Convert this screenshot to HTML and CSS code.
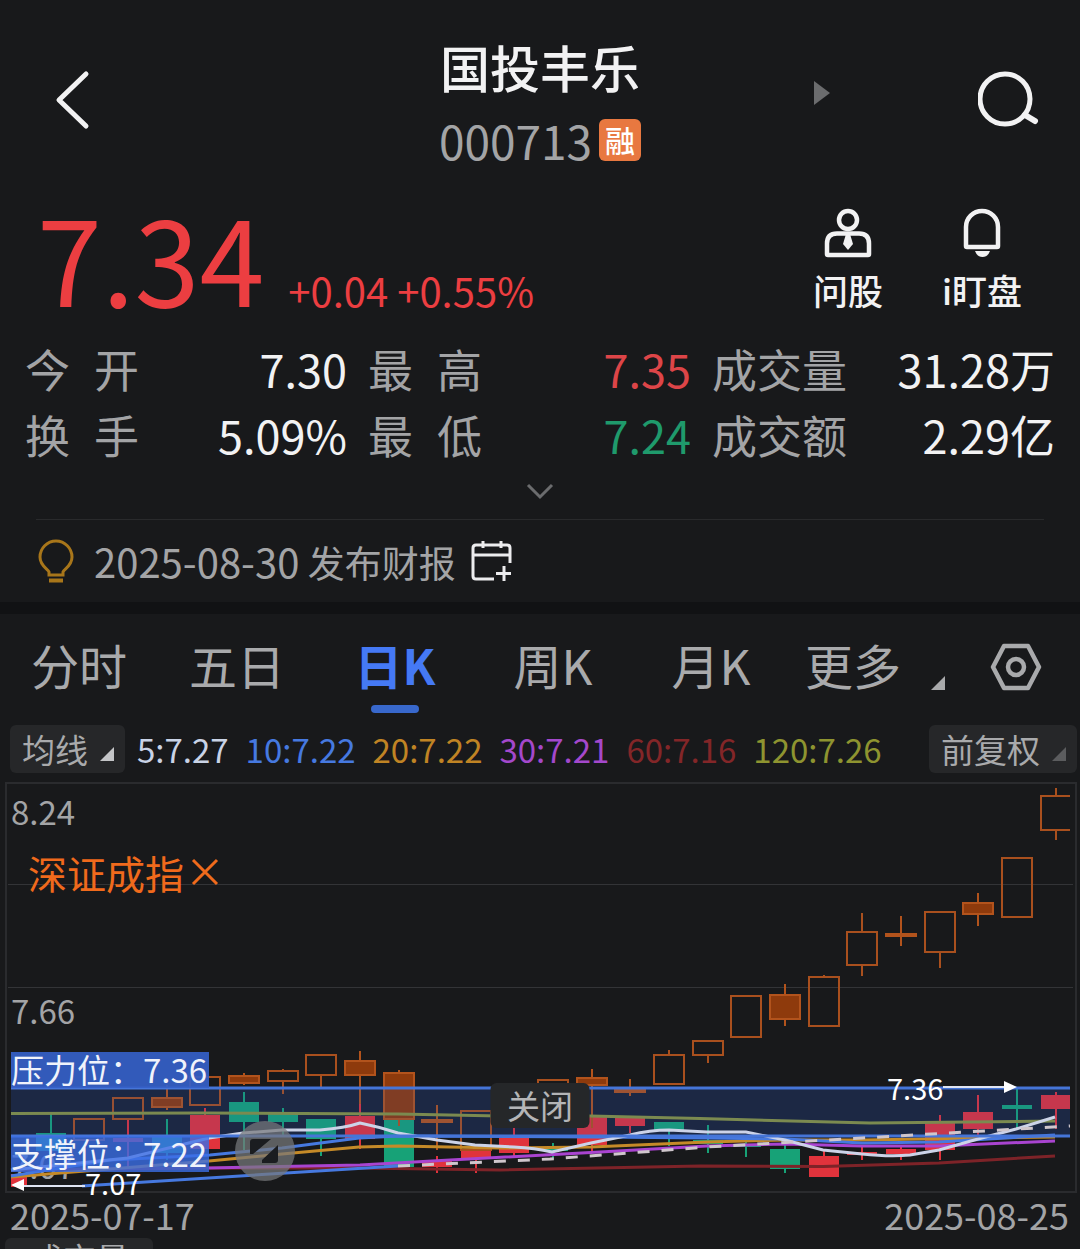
FILE: index.html
```html
<!DOCTYPE html>
<html lang="zh-CN">
<head>
<meta charset="utf-8">
<meta name="viewport" content="width=device-width, initial-scale=1">
<title>国投丰乐 000713</title>
<link rel="stylesheet" href="styles.css">
</head>
<body>
<main class="app">
  <header class="header">
    <button class="icon-btn back" aria-label="返回">
      <svg width="36" height="60" viewBox="0 0 36 60"><path d="M31 4 4 30l27 26" fill="none" stroke="#f2f2f3" stroke-width="5" stroke-linecap="round" stroke-linejoin="round"/></svg>
    </button>
    <div class="title">
      <h1 class="name">国投丰乐</h1>
      <p class="code">000713<span class="badge">融</span></p>
    </div>
    <div class="header-right">
      <button class="icon-btn next" aria-label="下一只">
        <svg width="16" height="26" viewBox="0 0 16 26"><path d="M0 1v24l16-12z" fill="#6b6c6e"/></svg>
      </button>
      <button class="icon-btn" aria-label="搜索">
        <svg width="62" height="56" viewBox="0 0 62 56"><circle cx="27" cy="28" r="25" fill="none" stroke="#f2f2f3" stroke-width="5"/><path d="m47 44 10 6" stroke="#f2f2f3" stroke-width="6" stroke-linecap="round"/></svg>
      </button>
    </div>
  </header>

  <section class="quote">
    <p class="price">7.34</p>
    <p class="change">+0.04 +0.55%</p>
    <div class="actions">
      <button class="action">
        <svg width="48" height="50" viewBox="0 0 48 50" fill="none" stroke="#f2f2f3" stroke-width="4.5"><circle cx="24" cy="12" r="9"/><path d="M13 25.500h22q10 0 10 10V46a1 1 0 0 1-1 1H4a1 1 0 0 1-1-1V35.500q0-10 10-10z"/><path d="M22 26h4l3 10-5 6-5-6z" fill="#f2f2f3" stroke="none"/></svg>
        问股
      </button>
      <button class="action">
        <svg width="48" height="50" viewBox="0 0 48 50" fill="none" stroke="#f2f2f3" stroke-width="4.500"><path d="M8 38V19a16 16 0 0 1 32 0v19q0 1-1 1H9q-1 0-1-1z"/><path d="M17 43h15q-2 6-7.500 6T17 43z" fill="#f2f2f3" stroke="none"/></svg>
        i盯盘
      </button>
    </div>
  </section>

  <dl class="stats">
    <div class="stat"><dt><span>今</span><span>开</span></dt><dd>7.30</dd></div>
    <div class="stat"><dt><span>最</span><span>高</span></dt><dd class="up">7.35</dd></div>
    <div class="stat"><dt class="wide">成交量</dt><dd>31.28万</dd></div>
    <div class="stat"><dt><span>换</span><span>手</span></dt><dd>5.09%</dd></div>
    <div class="stat"><dt><span>最</span><span>低</span></dt><dd class="down">7.24</dd></div>
    <div class="stat"><dt class="wide">成交额</dt><dd>2.29亿</dd></div>
  </dl>
  <button class="icon-btn expand" aria-label="展开">
    <svg width="30" height="18" viewBox="0 0 30 18"><path d="m3 3 12 12L27 3" fill="none" stroke="#6b6c6e" stroke-width="3"/></svg>
  </button>

  <section class="notice">
    <svg width="40" height="44" viewBox="0 0 40 44" fill="none" stroke="#a8761a" stroke-width="3"><path d="M13 36v-3c-1-3-9-6-9-15a16 16 0 0 1 32 0c0 9-8 12-9 15v3z"/><path d="M13 41.500h14" stroke-width="4"/></svg>
    <p class="notice-text"><time class="notice-date">2025-08-30</time> 发布财报</p>
    <button class="icon-btn" aria-label="添加提醒">
      <svg width="42" height="42" viewBox="0 0 42 42" fill="none" stroke="#ececee" stroke-width="3"><path d="M39 23V8q0-3-3-3H5Q2 5 2 8v28q0 3 3 3h18M2 15h37M12 1v7M30 1v7M33 26v15M25 33.500h15"/></svg>
    </button>
  </section>

  <nav class="tabs">
    <button class="tab">分时</button>
    <button class="tab">五日</button>
    <button class="tab active" aria-current="true">日K</button>
    <button class="tab">周K</button>
    <button class="tab">月K</button>
    <button class="tab more">更多<i class="corner"></i></button>
    <button class="tab" aria-label="设置">
      <svg width="52" height="48" viewBox="0 0 52 48" fill="none" stroke="#a9aaac" stroke-width="4.500"><path d="M14 3h24l11 21-11 21H14L3 24z" stroke-linejoin="round"/><circle cx="26" cy="24" r="8"/></svg>
    </button>
  </nav>

  <div class="averages">
    <button class="pill">均线<i class="corner light"></i></button>
    <ul class="ma-list">
      <li class="ma5">5:7.27</li>
      <li class="ma10">10:7.22</li>
      <li class="ma20">20:7.22</li>
      <li class="ma30">30:7.21</li>
      <li class="ma60">60:7.16</li>
      <li class="ma120">120:7.26</li>
    </ul>
    <button class="pill">前复权<i class="corner dim"></i></button>
  </div>

  <section class="chart">
    <svg class="plot" viewBox="0 782 1080 412" role="img" aria-label="日K线图">
      <defs><clipPath id="area"><rect x="11" y="784" width="1059" height="408"/></clipPath></defs>
      <rect class="frame" x="6" y="783" width="1070" height="409"/>
      <path class="grid" d="M8 884.500H1073M8 987.500H1073"/>
      <text class="axis" x="11" y="825">8.24</text>
      <text class="axis" x="11" y="1024">7.66</text>
      <text class="axis" x="11" y="1179">7.07</text>
      <g clip-path="url(#area)">
        <rect class="band" x="11" y="1088" width="1059" height="48"/>
        <g id="stock"></g>
        <g id="index"></g>
        <rect class="band" x="11" y="1088" width="1059" height="48"/>
      </g>
      <g class="line">
        <path class="s120" d="M11 1113.500 205 1113 398 1114 500 1116 590 1116 700 1118.500 870 1123 1055 1121"/>
        <path class="s60" d="M11 1170 209 1168 360 1168 500 1170 700 1166 823 1166.500 939 1163 1055 1156"/>
        <path class="s30" d="M209 1168 360 1165 450 1160 600 1152 707 1146 785 1144 862 1146 939 1146 1055 1141"/>
        <path class="s20" d="M11 1177 209 1161 282 1154 359 1147 398 1146 500 1148 591 1147 707 1142 785 1140 862 1140 1055 1137"/>
        <path class="s10" d="M11 1176 110 1160 210 1155 282 1148 359 1138 398 1136 600 1137 707 1138 785 1139 862 1143 939 1142 1055 1135"/>
        <path class="s5" d="M11 1170 128 1158 209 1138 243 1133 282 1130 320 1130Q345 1128 360 1123 380 1127 398 1133L437 1140 475 1145 514 1147Q535 1148 552 1152L591 1143 630 1135Q650 1130 669 1130L707 1132 746 1132 785 1140 823 1150 862 1154Q890 1157 910 1155L939 1150 978 1139 1016 1129 1055 1117"/>
        <path class="level" d="M11 1088H1070M11 1136H1070"/>
        <path class="s10" d="M82 1186 398 1166"/>
        <path class="trend" d="M398 1166 550 1159 707 1147 862 1138 1070 1126"/>
      </g>
      <rect class="tag" x="11" y="1052" width="198" height="36"/>
      <rect class="tag low" x="11" y="1136" width="198" height="36"/>
      <text class="tag-text" x="11" y="1083">压力位：7.36</text>
      <text class="tag-text" x="11" y="1167">支撑位：7.22</text>
      <path d="M85 1186H22M943 1087h66" stroke="#dfe4f2" stroke-width="2"/>
      <path d="m11 1185 13-6v12zM1017 1087l-13-6v12z" fill="#fff"/>
      <text class="mark" x="85" y="1195">7.07</text>
      <text class="mark" x="887" y="1100">7.36</text>
      <circle cx="265" cy="1151" r="30" fill="#77787b" fill-opacity=".72"/>
      <path d="M250 1142q0-3 3-3h18l-18 15h-3zM278 1145v15q0 3-3 3h-13v-3z" fill="#1b1d20"/>
    </svg>
    <button class="compare">深证成指<svg width="28" height="28" viewBox="0 0 28 28"><path d="m2 2 24 24M26 2 2 26" stroke="#f06a1c" stroke-width="3"/></svg></button>
    <button class="close">关闭</button>
  </section>
  <div class="dates"><time>2025-07-17</time><time>2025-08-25</time></div>
  <div class="volume"><button class="pill volume-pill">成交量</button></div>
</main>
<script src="chart.js"></script>
</body>
</html>
```
FILE: styles.css
```css
* { box-sizing: border-box; }

body {
  margin: 0;
  background: #18191b;
  color: #f2f2f3;
  font-family: "Noto Sans CJK SC", "Noto Sans", sans-serif;
}

h1, p, dl, dd, ul { margin: 0; padding: 0; }
ul { list-style: none; }

button {
  margin: 0;
  padding: 0;
  border: 0;
  background: none;
  color: inherit;
  font: inherit;
  cursor: pointer;
}

svg { display: block; }

.app { height: 100vh; overflow: hidden; }

.header {
  display: grid;
  grid-template-columns: 1fr auto 1fr;
  align-items: start;
  padding: 36px 40px 0;
}
.back { justify-self: start; margin: 34px 0 0 15px; }
.title { text-align: center; }
.name { font-size: 50px; line-height: 60px; font-weight: 500; }
.code {
  display: flex;
  align-items: center;
  justify-content: center;
  gap: 7px;
  margin-top: 18px;
  color: #a3a4a6;
  font-size: 46px;
  line-height: 52px;
}
.badge {
  width: 42px;
  height: 42px;
  border-radius: 6px;
  background: #e87840;
  color: #fff;
  font-size: 30px;
  line-height: 40px;
  font-weight: 500;
}
.header-right {
  display: flex;
  align-items: center;
  justify-content: space-between;
  padding: 35px 0 0 173px;
}
.next { margin-bottom: 12px; }

.quote {
  display: flex;
  align-items: baseline;
  margin-top: 30px;
  padding: 0 50px 0 37px;
  height: 120px;
  color: #ec3e41;
}
.price { font-size: 117px; line-height: 120px; }
.change { margin-left: 24px; font-size: 40px; line-height: 48px; }
.actions {
  display: flex;
  align-self: stretch;
  gap: 38px;
  margin: 12px 0 0 auto;
  color: #f2f2f3;
}
.action {
  display: flex;
  flex-direction: column;
  align-items: center;
  gap: 10px;
  width: 96px;
  font-size: 35px;
  line-height: 44px;
  font-weight: 500;
}

.stats {
  display: grid;
  grid-template-columns: 322fr 323fr 343fr;
  column-gap: 21px;
  margin-top: 20px;
  padding: 0 25px;
  font-size: 45px;
  line-height: 66px;
}
.stat { display: flex; justify-content: space-between; }
.stat dt { display: flex; justify-content: space-between; width: 114px; color: #a3a4a6; }
.stat dt.wide { width: auto; }
.stat .up { color: #dd4548; }
.stat .down { color: #1f9a6c; }
.expand { display: block; margin: 14px auto 0; }

.notice {
  display: flex;
  align-items: center;
  margin: 19px 36px 0;
  height: 83px;
  border-top: 1px solid #292a2c;
  color: #a3a4a6;
  font-size: 37px;
  line-height: 44px;
}
.notice-text { margin: 0 15px 0 18px; }
.notice-date { font-size: 40px; }

.tabs {
  display: grid;
  grid-template-columns: repeat(5, 158fr) 170fr 120fr;
  padding: 12px 0;
  border-top: 12px solid #111214;
  color: #a9aaac;
  font-size: 48px;
  line-height: 76px;
}
.tab {
  display: flex;
  flex-direction: column;
  align-items: center;
  height: 87px;
}
.tab svg { margin: 17px 8px 0 0; }
.active { color: #4579f5; font-weight: 700; }
.active::after {
  content: "";
  width: 48px;
  height: 8px;
  margin-top: 3px;
  border-radius: 4px;
  background: #3868cc;
}
.more { flex-direction: row; align-items: flex-start; gap: 30px; padding-left: 15px; }
.corner {
  width: 14px;
  height: 14px;
  background: #a9aaac;
  clip-path: polygon(100% 0, 100% 100%, 0 100%);
}
.more .corner { margin-top: 50px; }
.corner.light { background: #c4c5c7; }
.corner.dim { background: #5b5c5e; }

.averages {
  display: flex;
  align-items: center;
  justify-content: space-between;
  padding: 0 3px 9px 10px;
  font-size: 33px;
  line-height: 48px;
}
.pill {
  display: flex;
  align-items: center;
  gap: 12px;
  height: 48px;
  padding: 0 11px 0 12px;
  border-radius: 6px;
  background: #262729;
  color: #a9aaac;
  font-size: 33px;
  line-height: 44px;
}
.pill .corner { margin-top: 10px; }
.ma-list { display: flex; gap: 17px; margin: 0 auto 0 12px; }
.ma5 { color: #c9d3e6; }
.ma10 { color: #4679e0; }
.ma20 { color: #c08424; }
.ma30 { color: #a448cc; }
.ma60 { color: #832628; }
.ma120 { color: #8e9430; }

.chart { position: relative; }
.plot { width: 100%; height: auto; overflow: visible; }
.frame { fill: none; stroke: #2a2b2e; stroke-width: 2; }
.grid { stroke: #333437; }
.axis { fill: #a3a4a6; font-size: 33px; }
.band { fill: #2c55b8; fill-opacity: .14; }
.line path { fill: none; stroke-width: 3; }
.line .s5 { stroke: #ccd3e8; }
.line .s10 { stroke: #4679e0; }
.line .s20 { stroke: #c58a28; }
.line .s30 { stroke: #a944d0; }
.line .s60 { stroke: #7d2328; }
.line .s120 { stroke: #7b8a50; }
.line .level { stroke: #4575d8; }
.line .trend { stroke: #cfc6cc; stroke-dasharray: 12 12; }
.tag { fill: #3560c8; fill-opacity: .92; }
.tag.low { fill: #3b6ee6; fill-opacity: .8; }
.tag-text { fill: #f0f3fb; font-size: 33px; }
.mark { fill: #fff; font-size: 29px; }
.candle rect, .candle path { stroke-width: 2; }
.candle.rise { stroke: #e0333c; fill: #e0333c; }
.candle.fall { stroke: #17a277; fill: #17a277; }
.candle.hollow { stroke: #a9501e; fill: none; }
.candle.solid { stroke: #b2531c; fill: #8e3a0c; }

.compare {
  position: absolute;
  left: 28px;
  top: 62px;
  display: flex;
  align-items: center;
  gap: 7px;
  color: #f06a1c;
  font-size: 39px;
  line-height: 56px;
}
.close {
  position: absolute;
  left: 50%;
  top: 301px;
  width: 99px;
  height: 45px;
  transform: translateX(-50%);
  border-radius: 6px;
  background: #252729;
  color: #b4b5b7;
  font-size: 33px;
  line-height: 45px;
}

.dates {
  display: flex;
  justify-content: space-between;
  padding: 0 11px 0 10px;
  color: #a3a4a6;
  font-size: 36px;
  line-height: 40px;
}
.volume { padding: 4px 5px 0; }
.volume-pill { align-items: flex-start; justify-content: center; width: 148px; line-height: 40px; }
```
FILE: chart.js
```js
const NS = "http://www.w3.org/2000/svg";
const FIRST_X = 12;
const STEP = 38.65;

// Each row: slot, style, body top, body bottom, wick top, wick bottom.
const indexCandles = [
  [2, "hollow", 1119, 1140, 1119, 1140],
  [3, "hollow", 1098, 1119, 1098, 1119],
  [4, "solid", 1098, 1107, 1085, 1110],
  [5, "hollow", 1077, 1105, 1077, 1105],
  [6, "solid", 1076, 1083, 1073, 1085],
  [7, "hollow", 1071, 1081, 1069, 1094],
  [8, "hollow", 1055, 1075, 1055, 1087],
  [9, "solid", 1061, 1075, 1051, 1104],
  [10, "solid", 1073, 1119, 1070, 1126],
  [11, "solid", 1120, 1122, 1105, 1150],
  [12, "hollow", 1111, 1150, 1111, 1150],
  [14, "hollow", 1080, 1110, 1080, 1110],
  [15, "solid", 1078, 1085, 1069, 1128],
  [16, "solid", 1090, 1092, 1079, 1096],
  [17, "hollow", 1055, 1084, 1050, 1084],
  [18, "hollow", 1041, 1055, 1041, 1063],
  [19, "hollow", 996, 1037, 995, 1038],
  [20, "solid", 995, 1019, 984, 1026],
  [21, "hollow", 977, 1026, 975, 1026],
  [22, "hollow", 932, 965, 913, 976],
  [23, "solid", 934, 936, 916, 946],
  [24, "hollow", 912, 952, 912, 968],
  [25, "solid", 903, 914, 893, 926],
  [26, "hollow", 858, 917, 858, 917],
  [27, "hollow", 796, 830, 788, 840],
];

const stockCandles = [
  [0, "rise", 1175, 1186, 1175, 1186],
  [1, "fall", 1134, 1150, 1114, 1160],
  [3, "rise", 1139, 1141, 1120, 1168],
  [4, "fall", 1138, 1152, 1119, 1160],
  [5, "rise", 1116, 1148, 1108, 1148],
  [6, "fall", 1103, 1121, 1092, 1150],
  [7, "fall", 1115, 1121, 1108, 1135],
  [8, "fall", 1120, 1138, 1120, 1156],
  [9, "rise", 1117, 1138, 1076, 1149],
  [10, "fall", 1119, 1166, 1119, 1166],
  [11, "rise", 1161, 1166, 1156, 1173],
  [12, "rise", 1150, 1158, 1150, 1173],
  [13, "rise", 1139, 1152, 1128, 1156],
  [14, "fall", 1149, 1150, 1143, 1159],
  [15, "rise", 1117, 1144, 1117, 1152],
  [16, "rise", 1119, 1125, 1119, 1133],
  [17, "fall", 1123, 1129, 1123, 1146],
  [18, "fall", 1141, 1143, 1125, 1153],
  [19, "fall", 1145, 1146, 1139, 1157],
  [20, "fall", 1150, 1168, 1145, 1173],
  [21, "rise", 1157, 1176, 1151, 1176],
  [22, "rise", 1153, 1154, 1147, 1160],
  [23, "rise", 1150, 1153, 1145, 1160],
  [24, "rise", 1124, 1149, 1115, 1160],
  [25, "rise", 1113, 1128, 1095, 1135],
  [26, "fall", 1106, 1108, 1088, 1129],
  [27, "rise", 1096, 1108, 1092, 1129],
];

function el(name, attrs) {
  const node = document.createElementNS(NS, name);
  for (const key in attrs) node.setAttribute(key, attrs[key]);
  return node;
}

function draw(target, candles, halfWidth) {
  for (const [slot, style, top, bottom, high, low] of candles) {
    const x = Math.round(FIRST_X + slot * STEP);
    const g = el("g", { class: "candle " + style });
    g.append(
      el("path", { d: `M${x} ${high}V${top}M${x} ${bottom}V${low}` }),
      el("rect", { x: x - halfWidth, y: top, width: halfWidth * 2, height: bottom - top })
    );
    target.append(g);
  }
}

draw(document.getElementById("stock"), stockCandles, 14);
draw(document.getElementById("index"), indexCandles, 15);
```
